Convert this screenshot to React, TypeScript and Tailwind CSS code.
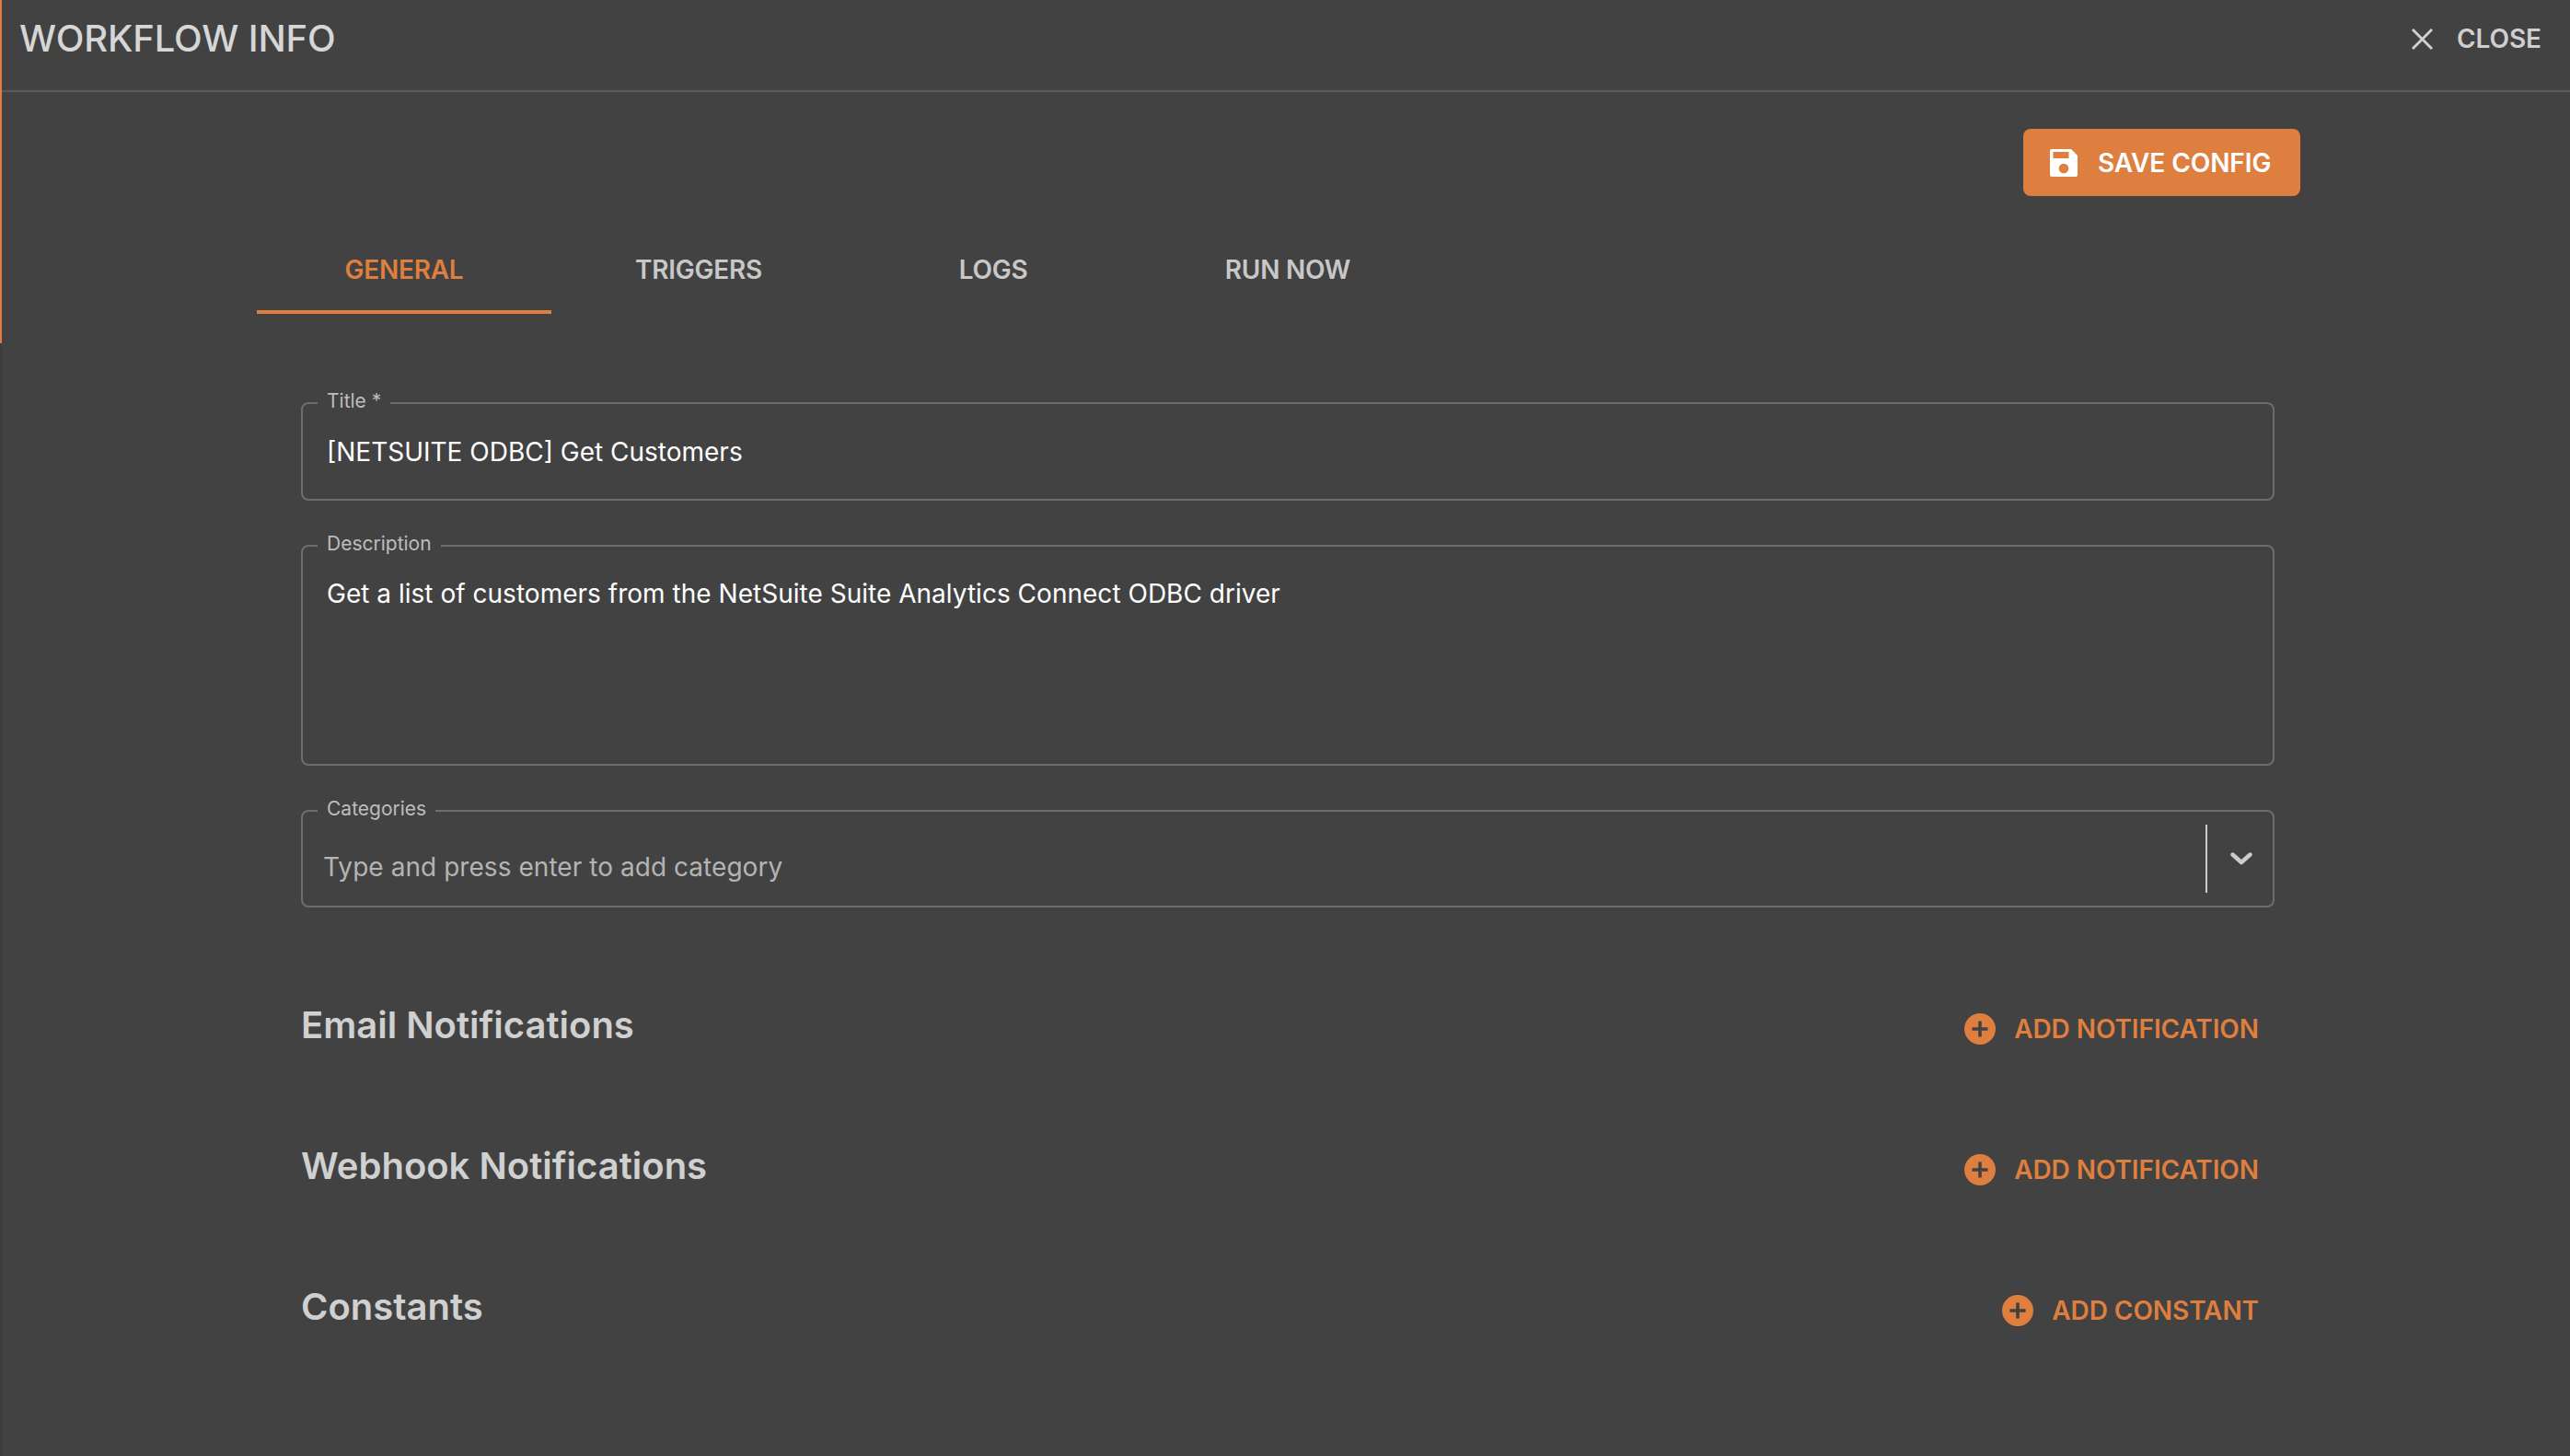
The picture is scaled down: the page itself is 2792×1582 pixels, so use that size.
const ORANGE = "#de7f3f";

function PlusCircle() {
  return (
    <svg viewBox="0 0 34 34" className="h-[34px] w-[34px] shrink-0">
      <circle cx="17" cy="17" r="17" fill={ORANGE} />
      <path d="M17 8.5v17M8.5 17h17" stroke="#424242" strokeWidth="3.6" />
    </svg>
  );
}

function SaveIcon() {
  return (
    <svg viewBox="0 0 30 30" className="h-[30px] w-[30px] shrink-0">
      <path
        fillRule="evenodd"
        fill="#fff"
        d="M2 0h21l7 7v21a2 2 0 0 1-2 2H2a2 2 0 0 1-2-2V2a2 2 0 0 1 2-2ZM3.5 3v7h17V3ZM15 15.7a5.3 5.3 0 1 0 0 10.6 5.3 5.3 0 0 0 0-10.6Z"
      />
    </svg>
  );
}

function Field({
  label,
  className,
  children,
}: {
  label: string;
  className: string;
  children: React.ReactNode;
}) {
  return (
    <fieldset className={`rounded-lg border-2 border-[#6d6d6d] ${className}`}>
      <legend className="ml-[16px] px-[10px] pb-[4px] text-[21px] leading-[22px] text-[#bdbdbd]">{label}</legend>
      {children}
    </fieldset>
  );
}

function SectionRow({ title, action }: { title: string; action: string }) {
  return (
    <div className="flex h-[153px] items-center justify-between">
      <h2 className="pb-[10px] text-[40px] font-semibold text-[#d0d0d0]">{title}</h2>
      <button className="flex items-center gap-[20px] pb-[2px] pr-[17px] text-[28px] font-semibold tracking-[-0.08px] text-[#de7f3f]">
        <PlusCircle />
        {action}
      </button>
    </div>
  );
}

export default function App() {
  return (
    <div className="relative h-[1582px] w-[2792px] overflow-hidden bg-[#424242] font-['Inter',sans-serif]">
      <div className="absolute left-0 top-0 h-[373px] w-[2px] bg-[#de7f3f]" />
      <div className="absolute bottom-0 left-0 top-[373px] w-[2px] bg-[#3c3c3c]" />

      <header className="flex h-[100px] items-start justify-between border-b-2 border-[#5a5a5a] pl-[21px] pr-[31px] pt-[18px]">
        <h1 className="text-[40px] font-medium leading-[48px] tracking-[-0.15px] text-[#d6d6d6]">WORKFLOW INFO</h1>
        <button className="flex h-[48px] items-center gap-[26px] text-[28px] font-semibold tracking-[-0.08px] text-[#cfcfcf]">
          <svg viewBox="0 0 24 24" className="h-[23px] w-[23px]" fill="none" stroke="#d0d0d0" strokeWidth="3">
            <path d="M1 1l22 22M23 1L1 23" />
          </svg>
          CLOSE
        </button>
      </header>

      <main className="ml-[279px] w-[2220px] pt-[40px]">
        <div className="flex justify-end">
          <button className="flex h-[73px] w-[301px] items-center gap-[22px] rounded-lg bg-[#de7f3f] pl-[29px] text-[28px] font-semibold tracking-[-0.08px] text-white">
            <SaveIcon />
            SAVE CONFIG
          </button>
        </div>

        <nav className="mt-[32px] flex">
          {["GENERAL", "TRIGGERS", "LOGS", "RUN NOW"].map((tab, i) => (
            <div
              key={tab}
              className={
                i === 0
                  ? "flex h-[96px] w-[320px] items-center justify-center border-b-4 border-[#de7f3f] pt-[4px] text-[28px] font-semibold tracking-[-0.25px] text-[#de7f3f]"
                  : "flex h-[96px] w-[320px] items-center justify-center border-b-4 border-transparent pt-[4px] text-[28px] font-semibold tracking-[-0.25px] text-[#c8c8c8]"
              }
            >
              {tab}
            </div>
          ))}
        </nav>

        <div className="ml-[48px] mr-[28px] mt-[84px]">
          <div className="flex flex-col gap-[36px]">
            <Field label="Title *" className="h-[119px]">
              <div className="pl-[26px] pt-[20px] text-[28px] leading-[40px] text-white">
                [NETSUITE ODBC] Get Customers
              </div>
            </Field>
            <Field label="Description" className="h-[252px]">
              <div className="pl-[26px] pt-[19px] text-[28px] leading-[40px] tracking-[0.02px] text-white">
                Get a list of customers from the NetSuite Suite Analytics Connect ODBC driver
              </div>
            </Field>
            <Field label="Categories" className="h-[118px]">
              <div className="mt-[2px] flex h-[74px] items-center justify-between px-[22px]">
                <span className="pt-[18px] text-[28px] tracking-[0.05px] text-[#b4b4b4]">Type and press enter to add category</span>
                <div className="flex items-center gap-[25px]">
                  <div className="h-[74px] w-[2px] bg-[#cccccc]" />
                  <svg viewBox="0 0 24 14" className="h-[14px] w-[24px]" fill="none" stroke="#cccccc" strokeWidth="4.4" strokeLinecap="round" strokeLinejoin="round">
                    <path d="M2.5 2.5L12 11l9.5-8.5" />
                  </svg>
                </div>
              </div>
            </Field>
          </div>

          <div className="mt-[56px]">
            <SectionRow title="Email Notifications" action="ADD NOTIFICATION" />
            <SectionRow title="Webhook Notifications" action="ADD NOTIFICATION" />
            <SectionRow title="Constants" action="ADD CONSTANT" />
          </div>
        </div>
      </main>
    </div>
  );
}
